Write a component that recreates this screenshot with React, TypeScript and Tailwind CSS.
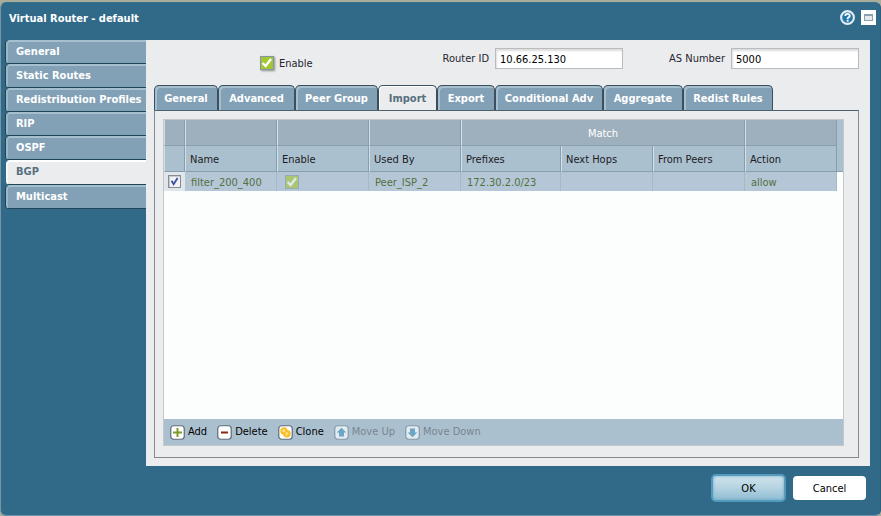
import clsx from "clsx";
import { useState, type ReactNode } from "react";

const sections = [
  "General",
  "Static Routes",
  "Redistribution Profiles",
  "RIP",
  "OSPF",
  "BGP",
  "Multicast",
];

const tabs = [
  { label: "General", width: "w-16" },
  { label: "Advanced", width: "w-[77px]" },
  { label: "Peer Group", width: "w-[83px]" },
  { label: "Import", width: "w-[59px]" },
  { label: "Export", width: "w-[58px]" },
  { label: "Conditional Adv", width: "w-[108px]" },
  { label: "Aggregate", width: "w-20" },
  { label: "Redist Rules", width: "w-[90px]" },
];

const columns = [
  "Name",
  "Enable",
  "Used By",
  "Prefixes",
  "Next Hops",
  "From Peers",
  "Action",
];

const headCell = "border-r border-b border-r-[#869eae] border-b-[#869eae] border-l border-l-[#d2e0e8]";
const topCell = clsx(headCell, "h-[26px] bg-[#9eb0be] pt-[2px] pb-0");
const nameCell = clsx(
  headCell,
  "h-[26px] bg-[#abc0cf] px-1 pt-[2px] pb-0 text-left font-normal text-[#1c1c24]"
);
const bodyCell = "h-[19px] border-r border-r-[#a3b8c8] bg-[#b5c7d6] px-[6px] pt-[2px] pb-0";

function GreenCheck({
  checked,
  onChange,
  faded,
  id,
  label,
}: {
  checked: boolean;
  onChange?: () => void;
  faded?: boolean;
  id: string;
  label?: string;
}) {
  return (
    <span
      className={clsx(
        "relative block h-[14px] w-[14px] shrink-0",
        faded ? "opacity-60" : "shadow-[1px_1px_2px_#8b8f93]"
      )}
    >
      <input
        id={id}
        type="checkbox"
        aria-label={label}
        checked={checked}
        disabled={faded}
        onChange={onChange}
        className="block h-full w-full appearance-none border border-[#8497a0] bg-white checked:bg-[#a5c633]"
      />
      {checked && (
        <svg
          viewBox="0 0 14 14"
          className="pointer-events-none absolute inset-0 h-full w-full"
          aria-hidden="true"
        >
          <path d="M2.6 7 5.6 10 11 3" fill="none" stroke="#fff" strokeWidth="2.4" />
        </svg>
      )}
    </span>
  );
}

function RowCheck({ checked, onChange }: { checked: boolean; onChange: () => void }) {
  return (
    <span className="relative mx-auto block h-[13px] w-[13px]">
      <input
        type="checkbox"
        aria-label="Select filter_200_400"
        checked={checked}
        onChange={onChange}
        className="block h-full w-full appearance-none border border-[#8b8b8b] bg-[#f1f3f6] shadow-[inset_1px_1px_1px_#c3c9d2]"
      />
      {checked && (
        <svg
          viewBox="0 0 13 13"
          className="pointer-events-none absolute inset-0 h-full w-full"
          aria-hidden="true"
        >
          <path d="M3.6 5.8 5.6 9.2 9.6 2.9" fill="none" stroke="#3d56a3" strokeWidth="1.9" />
        </svg>
      )}
    </span>
  );
}

function ToolButton({
  label,
  disabled,
  children,
}: {
  label: string;
  disabled?: boolean;
  children: ReactNode;
}) {
  return (
    <button
      type="button"
      disabled={disabled}
      className={clsx(
        "flex items-center gap-[3px] whitespace-nowrap",
        disabled ? "text-[#78858f]" : "text-black"
      )}
    >
      <svg viewBox="0 0 15 15" className="h-[15px] w-[15px]" aria-hidden="true">
        <rect
          x="0.75"
          y="0.75"
          width="13.5"
          height="13.5"
          rx="3"
          fill={disabled ? "#e4ebf0" : "#fff"}
          stroke={disabled ? "#8499a8" : "#5d6c78"}
          strokeWidth="1.2"
        />
        {children}
      </svg>
      {label}
    </button>
  );
}

export default function App() {
  const [section, setSection] = useState("BGP");
  const [tab, setTab] = useState("Import");
  const [enabled, setEnabled] = useState(true);
  const [selected, setSelected] = useState(true);
  const [routerId, setRouterId] = useState("10.66.25.130");
  const [asNumber, setAsNumber] = useState("5000");

  const field =
    "h-[21px] w-32 border border-[#b9bcbe] bg-white px-1 pt-[2px] text-black shadow-[inset_1px_2px_2px_#dedede] outline-none";

  return (
    <div className="flex min-h-screen flex-col bg-[#a9ac98] pt-[2px] font-['DejaVu_Sans_Condensed','DejaVu_Sans',sans-serif] text-[11px] leading-[14px] text-[#26262e]">
      <main className="flex flex-1 flex-col rounded-md border border-t-[#35708e] border-r-[#2b607d] border-b-[#6c95ad] border-l-[#7795a5] bg-[#306a88]">
        <header className="flex h-[37px] shrink-0 items-start justify-between pr-1 pl-2">
          <h1 className="pt-[9px] font-bold text-white">Virtual Router - default</h1>
          <div className="flex items-center gap-[6px] pt-[7px]">
            <button type="button" aria-label="Help">
              <svg viewBox="0 0 15 15" className="block h-[15px] w-[15px]" aria-hidden="true">
                <circle cx="7.5" cy="7.5" r="6.4" fill="#2477ad" stroke="#e2edf3" strokeWidth="2.1" />
                <path
                  d="M5.3 6.1c0-3 4.5-2.8 4.4-.2 0 1.5-2.1 1.4-2.1 3"
                  fill="none"
                  stroke="#fff"
                  strokeWidth="1.8"
                />
                <rect x="6.7" y="9.8" width="1.9" height="1.8" fill="#fff" />
              </svg>
            </button>
            <button type="button" aria-label="Maximize">
              <svg viewBox="0 0 15 15" className="block h-[15px] w-[15px]" aria-hidden="true">
                <rect width="15" height="15" fill="#fff" />
                <rect x="3.5" y="4.5" width="8" height="6" fill="#e6e9ec" stroke="#8ca1af" />
                <path d="M3 5h9" stroke="#8ca1af" strokeWidth="2" />
              </svg>
            </button>
          </div>
        </header>

        <div className="flex flex-1 pr-[10px] pl-[5px]">
          <nav className="flex w-[140px] shrink-0 flex-col">
            {sections.map((name) => (
              <button
                key={name}
                type="button"
                onClick={() => setSection(name)}
                className={clsx(
                  "rounded-l-[4px] border-t-2 border-b border-l-2 border-b-[#1f4558] pb-[2px] pl-2 text-left font-bold whitespace-nowrap",
                  name === section
                    ? "h-[25px] border-t-white border-l-[#f6f7f8] bg-[#ebecee] text-[#56707f]"
                    : "h-6 border-t-[#a6bfce] border-l-[#9db7c6] bg-[#82a1b6] text-white shadow-[-1px_0_0_#1f4558]"
                )}
              >
                {name}
              </button>
            ))}
          </nav>

          <section className="flex min-w-0 flex-1 flex-col bg-[#ebecee] px-2 pb-2">
            <div className="flex h-[45px] items-start gap-[46px] pr-[3px] pl-[106px]">
              <div className="mr-auto flex items-center gap-[5px] pt-[15px]">
                <GreenCheck
                  id="enable"
                  checked={enabled}
                  onChange={() => setEnabled(!enabled)}
                />
                <label htmlFor="enable" className="pt-[2px]">
                  Enable
                </label>
              </div>
              <div className="flex items-center gap-[6px] pt-2">
                <label htmlFor="router-id">Router ID</label>
                <input
                  id="router-id"
                  type="text"
                  value={routerId}
                  onChange={(e) => setRouterId(e.target.value)}
                  className={field}
                />
              </div>
              <div className="flex items-center gap-[6px] pt-2">
                <label htmlFor="as-number">AS Number</label>
                <input
                  id="as-number"
                  type="text"
                  value={asNumber}
                  onChange={(e) => setAsNumber(e.target.value)}
                  className={field}
                />
              </div>
            </div>

            <div className="flex h-[25px] shrink-0" role="tablist">
              {tabs.map(({ label, width }) => (
                <button
                  key={label}
                  type="button"
                  role="tab"
                  aria-selected={label === tab}
                  onClick={() => setTab(label)}
                  className={clsx(
                    "h-full shrink-0 rounded-t-[5px] border border-b-0 border-[#3d4f5c] pt-px text-center font-bold whitespace-nowrap",
                    width,
                    label === tab
                      ? "-mb-px h-[26px] bg-[#ebecee] text-[#56707f] shadow-[inset_1px_1px_0_#fff]"
                      : "bg-[#82a1b6] text-white shadow-[inset_2px_2px_0_#a6bfce]"
                  )}
                >
                  {label}
                </button>
              ))}
            </div>

            <div className="mr-[3px] flex flex-1 flex-col border border-[#85898d] border-t-[#4e606c] px-2 pt-2 pr-[14px] pb-[11px]">
              <div className="flex flex-1 flex-col border border-[#c3c7ca] bg-[#fcfefe]">
                <div className="flex-1">
                  <table className="w-full table-fixed border-separate border-spacing-0">
                    <colgroup>
                      <col className="w-[21px]" />
                      <col className="w-[92px]" />
                      <col className="w-[92px]" />
                      <col className="w-[92px]" />
                      <col className="w-[100px]" />
                      <col className="w-[92px]" />
                      <col className="w-[92px]" />
                      <col className="w-[92px]" />
                      <col />
                    </colgroup>
                    <thead>
                      <tr>
                        <td className={topCell} />
                        <td className={topCell} />
                        <td className={topCell} />
                        <td className={topCell} />
                        <th
                          colSpan={3}
                          scope="colgroup"
                          className={clsx(topCell, "text-center font-normal text-white")}
                        >
                          Match
                        </th>
                        <td className={topCell} />
                        <td className="bg-[#abc0cf]" />
                      </tr>
                      <tr>
                        <td className={nameCell} />
                        {columns.map((name) => (
                          <th key={name} scope="col" className={nameCell}>
                            {name}
                          </th>
                        ))}
                        <td className="border-b border-b-[#869eae] bg-[#abc0cf]" />
                      </tr>
                    </thead>
                    <tbody className="text-[#52703f]">
                      <tr>
                        <td className="bg-[#dfe6ec]">
                          <RowCheck
                            checked={selected}
                            onChange={() => setSelected(!selected)}
                          />
                        </td>
                        <td className={bodyCell}>filter_200_400</td>
                        <td className="border-r border-r-[#a3b8c8] bg-[#b5c7d6] pl-2">
                          <GreenCheck id="row-enable" label="Enable filter_200_400" checked faded />
                        </td>
                        <td className={bodyCell}>Peer_ISP_2</td>
                        <td className={bodyCell}>172.30.2.0/23</td>
                        <td className={bodyCell} />
                        <td className={bodyCell} />
                        <td className={bodyCell}>allow</td>
                        <td />
                      </tr>
                    </tbody>
                  </table>
                </div>

                <div className="flex h-[26px] items-center gap-[10px] bg-[#abc0cf] pl-[6px]">
                  <ToolButton label="Add">
                    <path d="M7.5 3v9M3 7.5h9" stroke="#7f9a2c" strokeWidth="2" />
                  </ToolButton>
                  <ToolButton label="Delete">
                    <path d="M4 7.5h7" stroke="#8a2713" strokeWidth="2" />
                  </ToolButton>
                  <ToolButton label="Clone">
                    <circle cx="5.9" cy="5.9" r="3.6" fill="#f9bd26" />
                    <circle cx="8.9" cy="8.8" r="3.8" fill="#f9bd26" />
                    <circle cx="5.7" cy="5.7" r="1.4" fill="#ffe7a6" />
                    <circle cx="8.8" cy="8.7" r="1.7" fill="#ffdb73" />
                  </ToolButton>
                  <ToolButton label="Move Up" disabled>
                    <path d="M7.5 2.8 12.3 7.5H10V11.5H5V7.5H2.7z" fill="#6aa6c6" />
                  </ToolButton>
                  <ToolButton label="Move Down" disabled>
                    <path d="M7.5 12.2 12.3 7.5H10V3.5H5V7.5H2.7z" fill="#6aa6c6" />
                  </ToolButton>
                </div>
              </div>
            </div>
          </section>
        </div>

        <footer className="flex h-[49px] shrink-0 items-start justify-end gap-[7px] pt-2 pr-[14px] text-black">
          <button
            type="button"
            className="h-7 w-[75px] rounded-[5px] border-2 border-[#549abd] bg-linear-to-b from-[#cfe3ec] via-[#b5d3e1] to-[#8fbdd3] pt-px shadow-[inset_0_0_3px_#66a7c6]"
          >
            OK
          </button>
          <button type="button" className="mt-[2px] h-6 w-[73px] rounded-[4px] bg-white pt-px">
            Cancel
          </button>
        </footer>
      </main>
    </div>
  );
}
